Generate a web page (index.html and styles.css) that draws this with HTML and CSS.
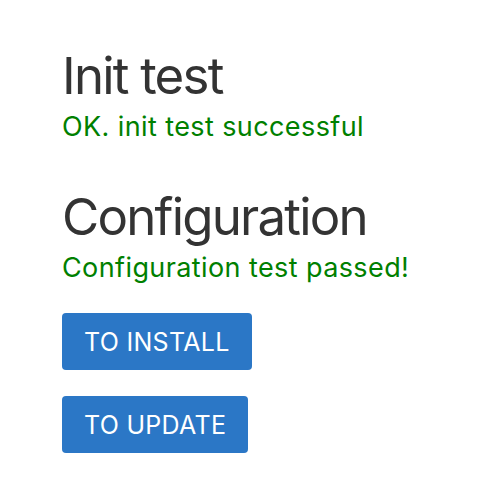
FILE: index.html
```html
<!DOCTYPE html>
<html lang="en">
<head>
    <meta charset="UTF-8">
    <title>Install</title>
    <link rel="stylesheet" href="styles.css">
</head>
<body>
    <div class="container">
        <!-- Init test -->
        <h1>Init test</h1>
        <p class="ok">OK. init test successful</p>

        <!-- Configuration -->
        <h1>Configuration</h1>
        <p class="ok">Configuration test passed!</p>

        <div class="actions">
            <button class="btn">TO INSTALL</button>
            <button class="btn">TO UPDATE</button>
        </div>
    </div>
</body>
</html>
```

FILE: styles.css
```css
body {
    margin: 0;
    font-family: Inter, "Noto Sans", sans-serif;
    color: #333;
    background-color: #fff;
}

.container {
    padding: 46px 0 0 62px;
}

h1 {
    font-size: 51px;
    font-weight: 400;
    letter-spacing: -1.8px;
    line-height: 60px;
    margin: 0;
}

.ok {
    color: #008000;
    font-size: 27px;
    letter-spacing: 0.4px;
    line-height: 32px;
    margin: 5px 0 44px;
}

.actions {
    display: flex;
    flex-direction: column;
    align-items: flex-start;
    gap: 26px;
    margin-top: -15px;
}

.btn {
    font-family: Inter, "Noto Sans", sans-serif;
    font-size: 25px;
    letter-spacing: 0.3px;
    color: #fff;
    background-color: #2b77c6;
    border: none;
    border-radius: 4px;
    height: 57px;
    padding: 0 22px;
}
```
